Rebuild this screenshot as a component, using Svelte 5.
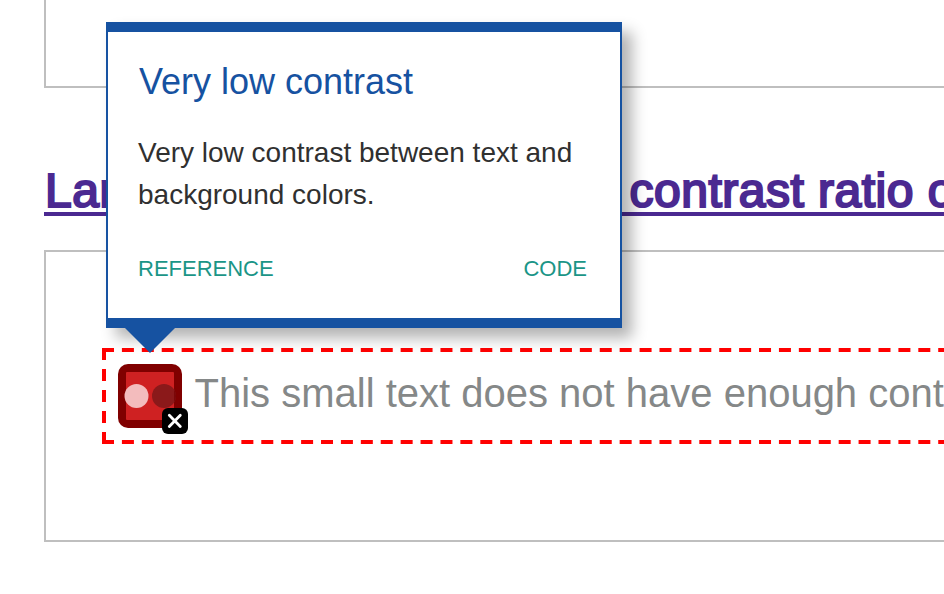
<script>
  const title = 'Very low contrast';
  const description = 'Very low contrast between text and background colors.';
</script>

<main class="page">
  <section class="box previous"></section>
  <a class="heading" href="#contrast"><span class="lead">Lar</span><span class="rest">contrast ratio of</span></a>
  <section class="box example">
    <div class="flagged">
      <svg class="outline" width="850" height="96" aria-hidden="true">
        <g fill="none" stroke="#ff0000" stroke-width="4">
          <path d="M0 2H850M0 94H850" stroke-dasharray="12 7.91" />
          <path d="M2 0V96" stroke-dasharray="12 9" />
        </g>
      </svg>
      <svg class="error-icon" width="72" height="72" viewBox="0 0 72 72" role="img" aria-label="Very low contrast">
        <rect x="0" y="0" width="64" height="64" rx="10" fill="#800000" />
        <rect x="8" y="8" width="48" height="48" rx="1" fill="#cf2122" />
        <circle cx="18.5" cy="32" r="12" fill="#f3bcbd" />
        <circle cx="46" cy="32" r="12" fill="#8b191a" />
        <path d="M56 25.5V38.5A12 12 0 0 0 56 25.5Z" fill="#7b0708" />
        <rect x="44" y="44" width="26" height="26" rx="6" fill="#000" />
        <path d="M51.3 51.2L62.3 62.4M62.3 51.2L51.3 62.4" stroke="#fff" stroke-width="2.8" stroke-linecap="round" />
      </svg>
      <span class="sample">This small text does not have enough contrast</span>
    </div>
  </section>
  <aside class="tooltip">
    <h3>{title}</h3>
    <p>{description}</p>
    <nav><a href="#reference">REFERENCE</a><a href="#code">CODE</a></nav>
    <svg class="arrow" width="54" height="27" aria-hidden="true"><path d="M0 0H54L27 27Z" fill="#1652a1" /></svg>
  </aside>
</main>

<style>
  .page {
    position: relative;
    box-sizing: border-box;
    width: 944px;
    height: 594px;
    padding-left: 44px;
    overflow: hidden;
    background: #fff;
    font-family: "Liberation Sans", Arial, sans-serif;
  }
  .box {
    box-sizing: border-box;
    border: 2px solid #bfbfbf;
    border-right: 0;
  }
  .previous {
    height: 88px;
    border-top: 0;
  }
  .heading {
    display: flex;
    box-sizing: border-box;
    height: 50px;
    margin-top: 78px;
    border-bottom: 4px solid #4b2991;
    color: #4b2991;
    font-size: 48px;
    line-height: 50px;
    white-space: nowrap;
    text-decoration: none;
    letter-spacing: 0.5px;
    -webkit-text-stroke: 2.2px #4b2991;
  }
  .lead {
    flex: 0 0 584.5px;
    text-indent: 1px;
  }
  .rest {
    text-indent: 1px;
  }
  .example {
    height: 292px;
    margin-top: 34px;
    padding: 96px 0 0 56px;
  }
  .flagged {
    position: relative;
    display: flex;
    align-items: flex-start;
    box-sizing: border-box;
    height: 96px;
    padding: 16px 0 0 16px;
  }
  .outline {
    position: absolute;
    left: 0;
    top: 0;
  }
  .error-icon {
    flex: none;
  }
  .sample {
    margin-left: 4.5px;
    color: #858888;
    font-size: 40px;
    line-height: 58px;
    white-space: nowrap;
  }
  .tooltip {
    position: absolute;
    left: 106px;
    top: 22px;
    box-sizing: border-box;
    width: 516px;
    height: 306px;
    padding: 28px 33px 0 30px;
    border: solid #1652a1;
    border-width: 10px 2px;
    background: #fff;
    box-shadow: 10px 10px 14px rgba(0, 0, 0, 0.3);
  }
  h3 {
    margin: 0;
    padding-left: 1px;
    color: #1652a1;
    font-size: 36px;
    font-weight: 400;
    line-height: 44px;
  }
  p {
    margin: 28px 0 0;
    color: #303030;
    font-size: 28px;
    line-height: 42px;
  }
  nav {
    display: flex;
    justify-content: space-between;
    margin-top: 39px;
    font-size: 22px;
    line-height: 28px;
  }
  nav a {
    color: #1b9587;
    text-decoration: none;
  }
  .arrow {
    position: absolute;
    left: 15px;
    top: 294px;
  }
</style>
